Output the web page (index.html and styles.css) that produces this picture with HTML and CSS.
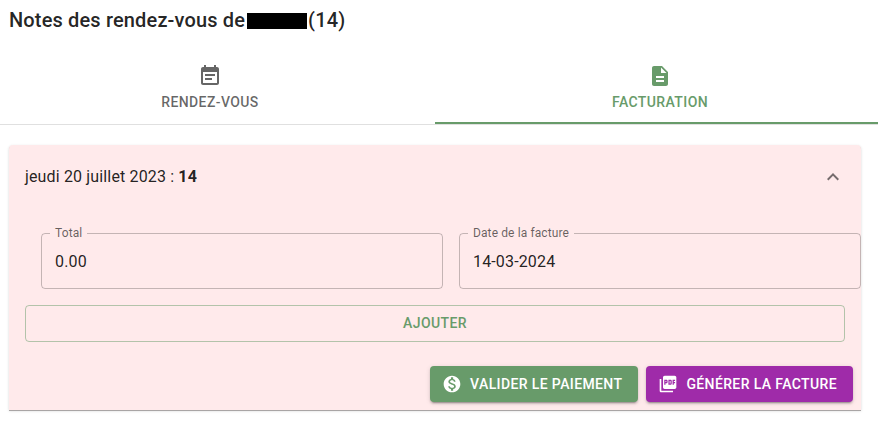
FILE: index.html
```html
<!DOCTYPE html>
<html lang="fr">
<head>
    <meta charset="UTF-8">
    <meta name="viewport" content="width=device-width, initial-scale=1.0">
    <title>Notes des rendez-vous</title>
    <link rel="stylesheet" href="styles.css">
</head>
<body>

    <h1 class="title">Notes des rendez-vous de<span class="hidden-name"></span>(14)</h1>

    <!-- Tabs -->
    <div class="tabs">
        <button class="tab">
            <svg class="icon" viewBox="0 0 24 24"><path d="M17 10H7v2h10v-2zm2-7h-1V1h-2v2H8V1H6v2H5c-1.11 0-1.99.9-1.99 2L3 19c0 1.1.89 2 2 2h14c1.1 0 2-.9 2-2V5c0-1.1-.9-2-2-2zm0 16H5V8h14v11zm-5-5H7v2h7v-2z"/></svg>
            <span>Rendez-vous</span>
        </button>
        <button class="tab active">
            <svg class="icon" viewBox="0 0 24 24"><path d="M14 2H6c-1.1 0-1.99.9-1.99 2L4 20c0 1.1.89 2 1.99 2H18c1.1 0 2-.9 2-2V8l-6-6zm2 16H8v-2h8v2zm0-4H8v-2h8v2zm-3-5V3.5L18.5 9H13z"/></svg>
            <span>Facturation</span>
        </button>
    </div>

    <!-- Invoice card -->
    <div class="card">
        <div class="card-header">
            <p>jeudi 20 juillet 2023 : <b>14</b></p>
            <svg class="icon chevron" viewBox="0 0 24 24"><path d="M12 8l-6 6 1.41 1.41L12 10.83l4.59 4.58L18 14z"/></svg>
        </div>

        <div class="card-body">
            <div class="fields">
                <fieldset class="field">
                    <legend>Total</legend>
                    <div class="value">0.00</div>
                </fieldset>
                <fieldset class="field">
                    <legend>Date de la facture</legend>
                    <div class="value">14-03-2024</div>
                </fieldset>
            </div>
            <button class="btn btn-outlined">Ajouter</button>
        </div>

        <div class="card-actions">
            <button class="btn btn-green">
                <svg class="icon" viewBox="0 0 24 24"><path d="M12 2C6.48 2 2 6.48 2 12s4.48 10 10 10 10-4.48 10-10S17.52 2 12 2zm1.41 16.09V20h-2.67v-1.93c-1.71-.36-3.16-1.46-3.27-3.4h1.96c.1 1.05.82 1.87 2.65 1.87 1.96 0 2.4-.98 2.4-1.59 0-.83-.44-1.61-2.67-2.14-2.48-.6-4.18-1.62-4.18-3.67 0-1.72 1.39-2.84 3.11-3.21V4h2.67v1.95c1.86.45 2.79 1.86 2.85 3.39H14.3c-.05-1.11-.64-1.87-2.22-1.87-1.5 0-2.4.68-2.4 1.64 0 .84.65 1.39 2.67 1.91s4.18 1.39 4.18 3.91c-.01 1.83-1.38 2.83-3.12 3.16z"/></svg>
                Valider le paiement
            </button>
            <button class="btn btn-purple">
                <svg class="icon" viewBox="0 0 24 24"><path d="M20 2H8c-1.1 0-2 .9-2 2v12c0 1.1.9 2 2 2h12c1.1 0 2-.9 2-2V4c0-1.1-.9-2-2-2zm-8.500 7.500c0 .83-.67 1.500-1.500 1.500H9v2H7.500V7H10c.83 0 1.500.67 1.500 1.500v1zm5 2c0 .83-.67 1.500-1.500 1.500h-2.500V7H15c.83 0 1.500.67 1.500 1.500v3zm4-3H19v1h1.500V11H19v2h-1.500V7h3v1.500zM9 9.500h1v-1H9v1zM4 6H2v14c0 1.100.9 2 2 2h14v-2H4V6zm10 5.500h1v-3h-1v3z"/></svg>
                Générer la facture
            </button>
        </div>
    </div>

</body>
</html>
```
FILE: styles.css
```css
* {
    margin: 0;
    padding: 0;
    box-sizing: border-box;
}

body {
    min-height: 100vh;
    background-color: #fff;
    color: rgba(0, 0, 0, 0.87);
    font-family: Roboto, sans-serif;
    font-size: 16px;
    overflow: hidden;
}

button {
    border: none;
    background: none;
    font-family: inherit;
    font-size: 14px;
    font-weight: 500;
    text-transform: uppercase;
    cursor: pointer;
}

.icon {
    width: 24px;
    height: 24px;
    fill: currentColor;
    flex-shrink: 0;
}

.title {
    display: flex;
    align-items: center;
    height: 40px;
    padding-left: 9px;
    margin-bottom: 12px;
    font-size: 20px;
    font-weight: 500;
    letter-spacing: 0.15px;
}

.hidden-name {
    width: 60px;
    height: 16px;
    margin: 2px 1px 0 2px;
    background-color: #000;
}

/* Tabs */
.tabs {
    display: flex;
    justify-content: center;
    height: 73px;
    border-bottom: 1px solid #e0e0e0;
    margin: 0 -7px 20px -15px;
}

.tab {
    flex: 0 0 450px;
    display: flex;
    flex-direction: column;
    align-items: center;
    justify-content: center;
    gap: 6px;
    padding-top: 1px;
    color: rgba(0, 0, 0, 0.6);
    line-height: 17.5px;
    letter-spacing: 0.4px;
    border-bottom: 2px solid transparent;
}

.tab.active {
    color: #689b6a;
    border-bottom-color: #689b6a;
}

/* Card */
.card {
    width: 852px;
    margin-left: 9px;
    background-color: #ffeaeb;
    border-radius: 4px 4px 0 0;
    box-shadow: 0 1px 0 #a9a5a5, 0 1px 3px rgba(0, 0, 0, 0.16);
}

.card-header {
    display: flex;
    align-items: center;
    justify-content: space-between;
    height: 64px;
    padding: 0 16px;
    letter-spacing: 0.15px;
}

.card-header p {
    padding-bottom: 2px;
}

.chevron {
    color: rgba(0, 0, 0, 0.54);
}

.card-body {
    padding: 24px 16px 16px;
}

.fields {
    display: flex;
    gap: 16px;
    margin: 0 -16px 16px 16px;
}

.field {
    flex: 1;
    height: 62px;
    margin-top: -6px;
    padding: 0 8px;
    border: 1px solid rgba(0, 0, 0, 0.23);
    border-radius: 4px;
}

.field legend {
    padding: 0 5px;
    color: rgba(0, 0, 0, 0.6);
    font-size: 12px;
    line-height: 12px;
    letter-spacing: 0.11px;
}

.value {
    padding: 11px 5px;
    line-height: 23px;
    letter-spacing: 0.15px;
}

/* Buttons */
.btn {
    display: flex;
    align-items: center;
    justify-content: center;
    height: 36px;
    padding: 0 16px;
    border-radius: 4px;
    letter-spacing: 0.38px;
}

.btn .icon {
    width: 20px;
    height: 20px;
    margin: 0 8px 0 -4px;
}

.btn-outlined {
    width: 100%;
    height: 37px;
    padding-bottom: 1px;
    color: #689b6a;
    border: 1px solid rgba(104, 155, 106, 0.5);
}

.card-actions {
    display: flex;
    justify-content: flex-end;
    gap: 8px;
    padding: 8px;
}

.btn-green,
.btn-purple {
    color: #fff;
    box-shadow: 0 3px 1px -2px rgba(0, 0, 0, 0.2), 0 2px 2px rgba(0, 0, 0, 0.14), 0 1px 5px rgba(0, 0, 0, 0.12);
}

.btn-green {
    background-color: #689b6a;
}

.btn-purple {
    background-color: #9f2ba9;
}
```
